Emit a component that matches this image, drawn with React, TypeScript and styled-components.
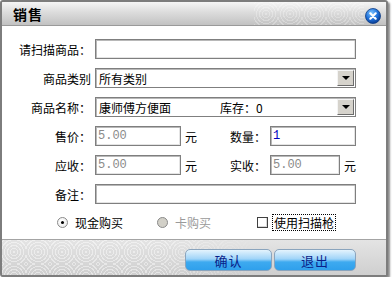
import styled, { createGlobalStyle } from "styled-components";

const GlobalStyle = createGlobalStyle`
  html, body {
    margin: 0;
    padding: 0;
    background: #ffffff;
  }
  body {
    font-family: "Noto Sans CJK SC", "DejaVu Sans", sans-serif;
    font-size: 12px;
    color: #000;
  }
`;

const swirl = `repeating-radial-gradient(circle at 12px 12px, rgba(255,255,255,0.45) 0 1px, rgba(255,255,255,0) 1px 3px)`;

export default function App() {
  return (
    <>
      <GlobalStyle />
      <Window>
        <TitleBar>
          <Title>销售</Title>
          <Swirls />
          <CloseButton>
            <svg width="16" height="16" viewBox="0 0 16 16">
              <defs>
                <radialGradient id="cb" cx="40%" cy="30%" r="70%">
                  <stop offset="0" stopColor="#7cc4ff" />
                  <stop offset="0.6" stopColor="#1e6fd8" />
                  <stop offset="1" stopColor="#0b3f96" />
                </radialGradient>
              </defs>
              <circle cx="8" cy="8" r="7.5" fill="url(#cb)" stroke="#0d3c85" strokeWidth="0.8" />
              <path d="M5.3 5.3 L10.7 10.7 M10.7 5.3 L5.3 10.7" stroke="#fff" strokeWidth="2.2" strokeLinecap="round" />
            </svg>
          </CloseButton>
        </TitleBar>

        <Body>
          <Row>
            <Label>请扫描商品：</Label>
            <TextBox width={261} />
          </Row>
          <Row>
            <Label>商品类别</Label>
            <Select>
              <SelectText>所有类别</SelectText>
              <DropButton><Arrow /></DropButton>
            </Select>
          </Row>
          <Row>
            <Label>商品名称：</Label>
            <Select>
              <SelectText>康师傅方便面</SelectText>
              <Stock>库存：0</Stock>
              <DropButton><Arrow /></DropButton>
            </Select>
          </Row>
          <Row>
            <Label>售价：</Label>
            <TextBox width={86}><Value>5.00</Value></TextBox>
            <Unit>元</Unit>
            <SideLabel>数量：</SideLabel>
            <TextBox width={86}><Value active>1</Value></TextBox>
          </Row>
          <Row>
            <Label>应收：</Label>
            <TextBox width={86}><Value>5.00</Value></TextBox>
            <Unit>元</Unit>
            <SideLabel>实收：</SideLabel>
            <TextBox width={70}><Value>5.00</Value></TextBox>
            <Unit>元</Unit>
          </Row>
          <Row>
            <Label>备注：</Label>
            <TextBox width={261} />
          </Row>
          <OptionRow>
            <Option>
              <Radio checked />
              <OptionText>现金购买</OptionText>
            </Option>
            <Option>
              <Radio disabled />
              <OptionText disabled>卡购买</OptionText>
            </Option>
            <Option>
              <CheckBox />
              <OptionText focused>使用扫描枪</OptionText>
            </Option>
          </OptionRow>
        </Body>

        <Footer>
          <FooterSwirls />
          <ActionButton width={87}>确认</ActionButton>
          <ActionButton width={82}>退出</ActionButton>
        </Footer>
      </Window>
    </>
  );
}

const Window = styled.div`
  width: 388px;
  height: 277px;
  box-sizing: border-box;
  border: 2px solid #7d7d7d;
  border-radius: 3px;
  box-shadow: 2px 2px 2px rgba(0, 0, 0, 0.45);
  display: flex;
  flex-direction: column;
  overflow: hidden;
  background: #fff;
`;

const TitleBar = styled.div`
  height: 23px;
  flex-shrink: 0;
  border-bottom: 1px solid #9a9a9a;
  background: linear-gradient(#f6f6f6, #dcdcdc 45%, #c2c2c2);
  display: flex;
  align-items: center;
  position: relative;
`;

const Title = styled.div`
  margin-left: 11px;
  font-size: 14px;
  font-weight: 700;
  letter-spacing: 1px;
`;

const Swirls = styled.div`
  position: absolute;
  right: 22px;
  top: 0;
  width: 110px;
  height: 23px;
  background: ${swirl};
  background-size: 24px 24px;
  opacity: 0.6;
`;

const CloseButton = styled.div`
  margin-left: auto;
  margin-right: 5px;
  margin-top: 4px;
  width: 16px;
  height: 16px;
  position: relative;
`;

const Body = styled.div`
  height: 213px;
  flex-shrink: 0;
  box-sizing: border-box;
  padding-top: 13px;
  display: flex;
  flex-direction: column;
  gap: 9px;
`;

const Row = styled.div`
  height: 20px;
  display: flex;
  align-items: center;
`;

const Label = styled.div`
  width: 89px;
  margin-right: 4px;
  text-align: right;
  white-space: nowrap;
`;

const SideLabel = styled.div`
  width: 40px;
  margin-left: 33px;
  white-space: nowrap;
`;

const TextBox = styled.div<{ width: number }>`
  width: ${(p) => p.width}px;
  height: 20px;
  box-sizing: border-box;
  border: 1px solid #7f7f7f;
  box-shadow: inset 1px 1px 0 #b8b8b8, inset -1px -1px 0 #e4e4e4;
  background: #fff;
  display: flex;
  align-items: center;
  padding-left: 2px;
`;

const Value = styled.span<{ active?: boolean }>`
  font-family: "Liberation Mono", "DejaVu Sans Mono", monospace;
  font-size: 12px;
  color: ${(p) => (p.active ? "#0000c0" : "#8a8a8a")};
`;

const Unit = styled.div`
  margin-left: 4px;
`;

const Select = styled.div`
  width: 261px;
  height: 20px;
  box-sizing: border-box;
  border: 1px solid #7f7f7f;
  box-shadow: inset 1px 1px 0 #b8b8b8;
  display: flex;
  align-items: center;
  padding: 0 1px 0 3px;
`;

const SelectText = styled.div`
  width: 120px;
`;

const Stock = styled.div`
  margin-left: 1px;
`;

const DropButton = styled.div`
  margin-left: auto;
  width: 17px;
  height: 16px;
  box-sizing: border-box;
  background: #d6d3cc;
  border: 1px solid;
  border-color: #f4f4f4 #6c6c6c #6c6c6c #f4f4f4;
  display: flex;
  align-items: center;
  justify-content: center;
`;

const Arrow = styled.div`
  width: 0;
  height: 0;
  border-left: 4px solid transparent;
  border-right: 4px solid transparent;
  border-top: 4px solid #000;
`;

const OptionRow = styled.div`
  height: 20px;
  margin-top: -1px;
  display: flex;
  align-items: center;
  padding-left: 55px;
`;

const Option = styled.div`
  width: 100px;
  display: flex;
  align-items: center;
`;

const Radio = styled.div<{ checked?: boolean; disabled?: boolean }>`
  width: 11px;
  height: 11px;
  box-sizing: border-box;
  border-radius: 50%;
  border: 1px solid #8a8a8a;
  background: ${(p) => (p.disabled ? "#d2d0c8" : "radial-gradient(circle at 40% 35%, #fff, #e8e8e8)")};
  position: relative;
  &::after {
    content: "";
    display: ${(p) => (p.checked ? "block" : "none")};
    position: absolute;
    left: 3px;
    top: 3px;
    width: 3px;
    height: 3px;
    border-radius: 50%;
    background: #000;
  }
`;

const CheckBox = styled.div`
  width: 11px;
  height: 11px;
  box-sizing: border-box;
  border: 1px solid #404040;
  box-shadow: inset -1px -1px 0 #d8d8d8;
  background: #fff;
`;

const OptionText = styled.div<{ disabled?: boolean; focused?: boolean }>`
  margin-left: ${(p) => (p.focused ? "5px" : "6px")};
  color: ${(p) => (p.disabled ? "#9a9a9a" : "#000")};
  outline: ${(p) => (p.focused ? "1px dotted #000" : "none")};
  padding: 0 1px;
  line-height: 15px;
  font-size: 12px;
`;

const Footer = styled.div`
  flex: 1;
  position: relative;
  border-top: 1px solid #a4a4a4;
  background: linear-gradient(#e4e4e4, #cfcfcf);
  display: flex;
  justify-content: flex-end;
  align-items: flex-start;
  gap: 2px;
  padding: 9px 30px 0 0;
`;

const FooterSwirls = styled.div`
  position: absolute;
  left: 0;
  top: 0;
  width: 260px;
  height: 100%;
  background: ${swirl};
  background-size: 24px 24px;
  -webkit-mask-image: linear-gradient(to right, #000 60%, transparent);
  mask-image: linear-gradient(to right, #000 60%, transparent);
`;

const ActionButton = styled.div<{ width: number }>`
  width: ${(p) => p.width}px;
  height: 22px;
  box-sizing: border-box;
  border: 1px solid #8aa4bd;
  border-radius: 5px;
  background: linear-gradient(#e4f3fd, #9fd4f8 45%, #3eaaf0 60%, #2fa0ec);
  color: #0a1f8a;
  font-size: 13px;
  display: flex;
  align-items: center;
  justify-content: center;
  letter-spacing: 1px;
  position: relative;
`;
